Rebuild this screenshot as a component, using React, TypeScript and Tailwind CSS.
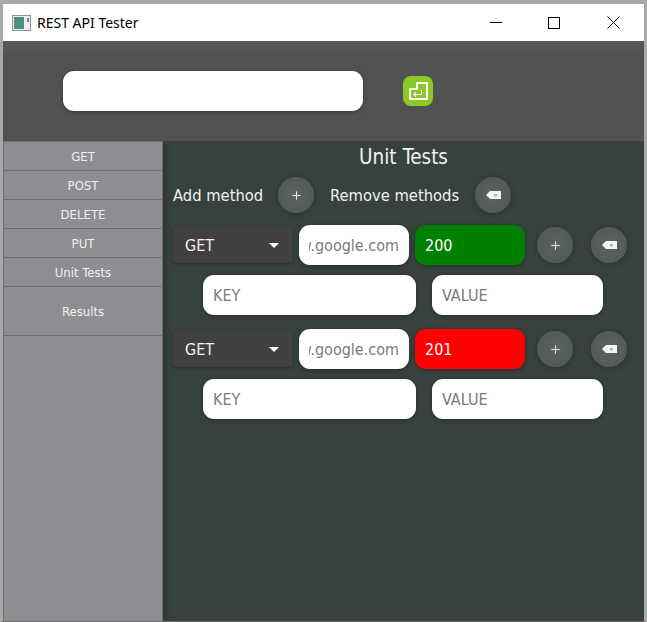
import React from "react";
import { Plus } from "lucide-react";

const methods = ["GET", "POST", "DELETE", "PUT", "Unit Tests"];

// tag shaped "backspace" glyph used on the remove buttons
const BackspaceIcon = () => (
  <svg width="15" height="8" viewBox="0 0 15 8">
    <path d="M0 4 L4 0 H15 V8 H4 Z" fill="#f4f4f4" />
    <rect x="8" y="3" width="3" height="2.5" fill="#b5b5b5" />
  </svg>
);

const RoundButton = ({ children }: { children: React.ReactNode }) => (
  <div className="flex h-9 w-9 shrink-0 items-center justify-center rounded-full bg-[radial-gradient(circle,#5b615f_0%,#515755_100%)] shadow-[0_1px_6px_rgba(0,0,0,0.25)]">
    {children}
  </div>
);

const AddIcon = () => <Plus size={13} strokeWidth={2} className="text-[#dfeaf5]" />;

const TextBox = ({ text, className }: { text: string; className: string }) => (
  <div className={`flex h-10 items-center rounded-[11px] bg-white px-2.5 pt-0.5 text-[16px] text-[#7b7b7b] shadow-[0_1px_4px_rgba(0,0,0,0.3)] ${className}`}>
    {text}
  </div>
);

const TestRow = ({ status, color }: { status: string; color: string }) => (
  <div>
    <div className="flex h-10 items-center">
      <div className="flex h-9 w-[120px] items-center justify-between rounded-[3px] bg-[#413f3f] pl-3 pr-[14px] text-[16px] text-[#f2f2f2] shadow-[0_1px_3px_rgba(0,0,0,0.3)]">
        <span className="pt-0.5">GET</span>
        <div className="h-0 w-0 border-x-[5px] border-t-[5px] border-x-transparent border-t-white" />
      </div>
      <div className="ml-1.5 flex h-10 w-[110px] items-center rounded-[11px] bg-white px-2.5 pt-0.5 text-[16px] text-[#7b7b7b] shadow-[0_1px_4px_rgba(0,0,0,0.3)]">
        <div className="flex w-full justify-end overflow-hidden whitespace-nowrap">www.google.com</div>
      </div>
      <div className={`ml-1.5 flex h-10 w-[110px] items-center rounded-[11px] px-2.5 pt-0.5 text-[16px] text-white shadow-[0_1px_4px_rgba(0,0,0,0.3)] ${color}`}>
        {status}
      </div>
      <div className="ml-3">
        <RoundButton>
          <AddIcon />
        </RoundButton>
      </div>
      <div className="ml-[18px]">
        <RoundButton>
          <BackspaceIcon />
        </RoundButton>
      </div>
    </div>
    <div className="mt-2.5 flex gap-4 pl-[30px]">
      <TextBox text="KEY" className="w-[213px]" />
      <TextBox text="VALUE" className="w-[171px]" />
    </div>
  </div>
);

export default function App() {
  return (
    <div className="flex h-[622px] w-[647px] flex-col overflow-hidden border-x-[3px] border-t-[4px] border-b border-x-[#a9a9a9] border-t-[#a9a9a9] border-b-[#6c6c6c] bg-[#37413e] font-['DejaVu_Sans',sans-serif] font-stretch-condensed">
      {/* Title bar */}
      <div className="flex h-[37px] shrink-0 items-center bg-white text-black">
        <svg width="19" height="16" viewBox="0 0 19 16" className="ml-[9px] shrink-0">
          <rect x="0.5" y="0.5" width="18" height="15" fill="#eceeee" stroke="#8d9296" />
          <rect x="2" y="2" width="10" height="12" fill="#4d8f84" />
          <rect x="15" y="3" width="2" height="4" fill="#5c86b8" />
        </svg>
        <span className="ml-[6px] flex-1 font-['Noto_Sans',sans-serif] text-[14px] font-stretch-normal">REST API Tester</span>
        <div className="h-px w-3 bg-black" />
        <div className="ml-[46px] h-3 w-3 border border-black" />
        <svg width="13" height="13" viewBox="0 0 13 13" className="ml-[47px] mr-[24px]">
          <path d="M0.5 0.5 L12.5 12.5 M12.5 0.5 L0.5 12.5" stroke="#000" strokeWidth="1" fill="none" />
        </svg>
      </div>

      {/* URL bar */}
      <div className="flex h-[100px] shrink-0 items-center bg-gradient-to-b from-[#59595b] to-[#505153] to-[15%] pl-[60px]">
        <div className="h-10 w-[300px] rounded-[11px] bg-white shadow-[0_1px_4px_rgba(0,0,0,0.3)]" />
        <div className="ml-10 flex h-[30px] w-[30px] items-center justify-center rounded-[8px] bg-[#8cc925]">
          <svg width="19" height="18" viewBox="0 0 19 18" fill="none" stroke="#fff">
            <path d="M1 17 V7 H8 V1 H18 V17 Z" strokeWidth="2" strokeLinejoin="round" />
            <path d="M12.5 8 V11.5 Q12.5 12.5 11.5 12.5 H5 M7 10.5 L5 12.5 L7 14.5" strokeWidth="1.2" />
          </svg>
        </div>
      </div>

      <div className="flex flex-1 overflow-hidden">
        {/* Sidebar */}
        <div className="w-40 shrink-0 border-x border-t border-[#6f6f72] bg-[#8e8d92] text-[13px] text-[#f0f0f0] shadow-[3px_0_5px_rgba(0,0,0,0.18)]">
          {methods.map((m) => (
            <div key={m} className="flex h-[29px] items-center justify-center border-b border-[#6f6f72] pt-0.5">
              {m}
            </div>
          ))}
          <div className="flex h-[49px] items-center justify-center border-b border-[#6f6f72] pt-0.5">Results</div>
        </div>

        {/* Unit tests */}
        <div className="flex-1 px-2.5 text-[#f2f2f2]">
          <div className="flex h-8 items-center justify-center text-[20.5px]">Unit Tests</div>
          <div className="mt-1 flex h-9 items-center text-[16.4px]">
            <span className="w-[105px] pt-[3px]">Add method</span>
            <RoundButton>
              <AddIcon />
            </RoundButton>
            <span className="ml-4 w-[145px] pt-[3px]">Remove methods</span>
            <RoundButton>
              <BackspaceIcon />
            </RoundButton>
          </div>
          <div className="mt-3 flex flex-col gap-3.5">
            <TestRow status="200" color="bg-[#008000]" />
            <TestRow status="201" color="bg-[#ff0000]" />
          </div>
        </div>
      </div>
    </div>
  );
}
